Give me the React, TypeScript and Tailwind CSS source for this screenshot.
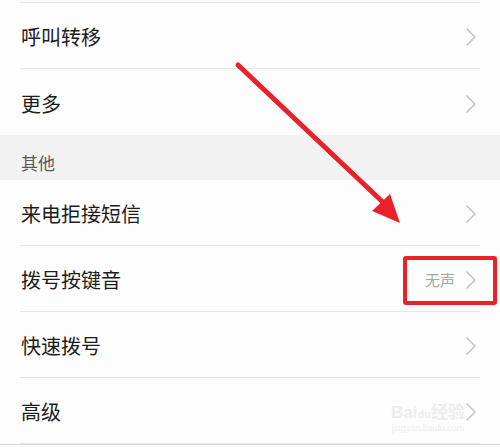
// Call settings list with an annotation arrow + highlight box drawn on top.
const cjk = {fontFamily: '"Noto Sans CJK SC", "Noto Sans", sans-serif'};

function Chevron() {
  return (
    <svg width="12" height="20" viewBox="0 0 12 20" fill="none">
      <polyline points="1.5,1.5 10,10 1.5,18.5" stroke="#c6c6c6" strokeWidth="1.6" strokeLinejoin="round" />
    </svg>
  );
}

function Row({label, value, last}: {label: string; value?: string; last?: boolean}) {
  return (
    <div className="bg-[#fdfdfd] px-[20px]">
      <div
        className={
          'flex h-[66px] items-center justify-between pl-[1px] pr-[3px] ' +
          (last ? '' : 'border-b border-[#e6e6e6]')
        }
      >
        <span className="pt-[3px] text-[20px] text-[#1c1c1c]">{label}</span>
        <div className="flex items-center gap-[10px] pt-[3px]">
          {value && <span className="text-[15px] text-[#a6a6a6]">{value}</span>}
          <Chevron />
        </div>
      </div>
    </div>
  );
}

export default function App() {
  return (
    <div className="relative h-[447px] w-[500px] overflow-hidden bg-[#fdfdfd]" style={cjk}>
      <div className="bg-[#fdfdfd] px-[20px]">
        <div className="h-[3px] border-b border-[#e6e6e6]" />
      </div>
      <Row label="呼叫转移" />
      <Row label="更多" last />

      <div className="flex h-[45px] items-center bg-[#f2f2f2] pl-[21px] pt-[10px]">
        <span className="text-[17px] text-[#5a5a5a]">其他</span>
      </div>

      <Row label="来电拒接短信" />
      <Row label="拨号按键音" value="无声" />
      <Row label="快速拨号" />
      <Row label="高级" />
      <div className="h-px bg-[#d9d9d9]" />

      {/* red annotation arrow */}
      <svg className="pointer-events-none absolute left-0 top-0" width="500" height="447">
        <line x1="238" y1="65" x2="388" y2="207" stroke="#e8212b" strokeWidth="5" strokeLinecap="round" />
        <polygon points="400,223 372,211 390,194" fill="#e8212b" />
      </svg>

      {/* highlight box around the value */}
      <div className="pointer-events-none absolute left-[403px] top-[256px] h-[49px] w-[94px] rounded-[3px] border-[4px] border-[#e8212b]" />

      {/* faint watermark */}
      <div
        className="pointer-events-none absolute left-[384px] top-[404px] w-[88px] text-center leading-none text-[#ededed]"
        style={{fontFamily: '"Liberation Sans", "Noto Sans CJK SC", sans-serif'}}
      >
        <div className="whitespace-nowrap text-[17px] font-bold">
          Bai<span className="text-[11px]">du</span>经验
        </div>
        <div className="mt-[3px] whitespace-nowrap text-[9px]">jingyan.baidu.com</div>
      </div>
    </div>
  );
}
